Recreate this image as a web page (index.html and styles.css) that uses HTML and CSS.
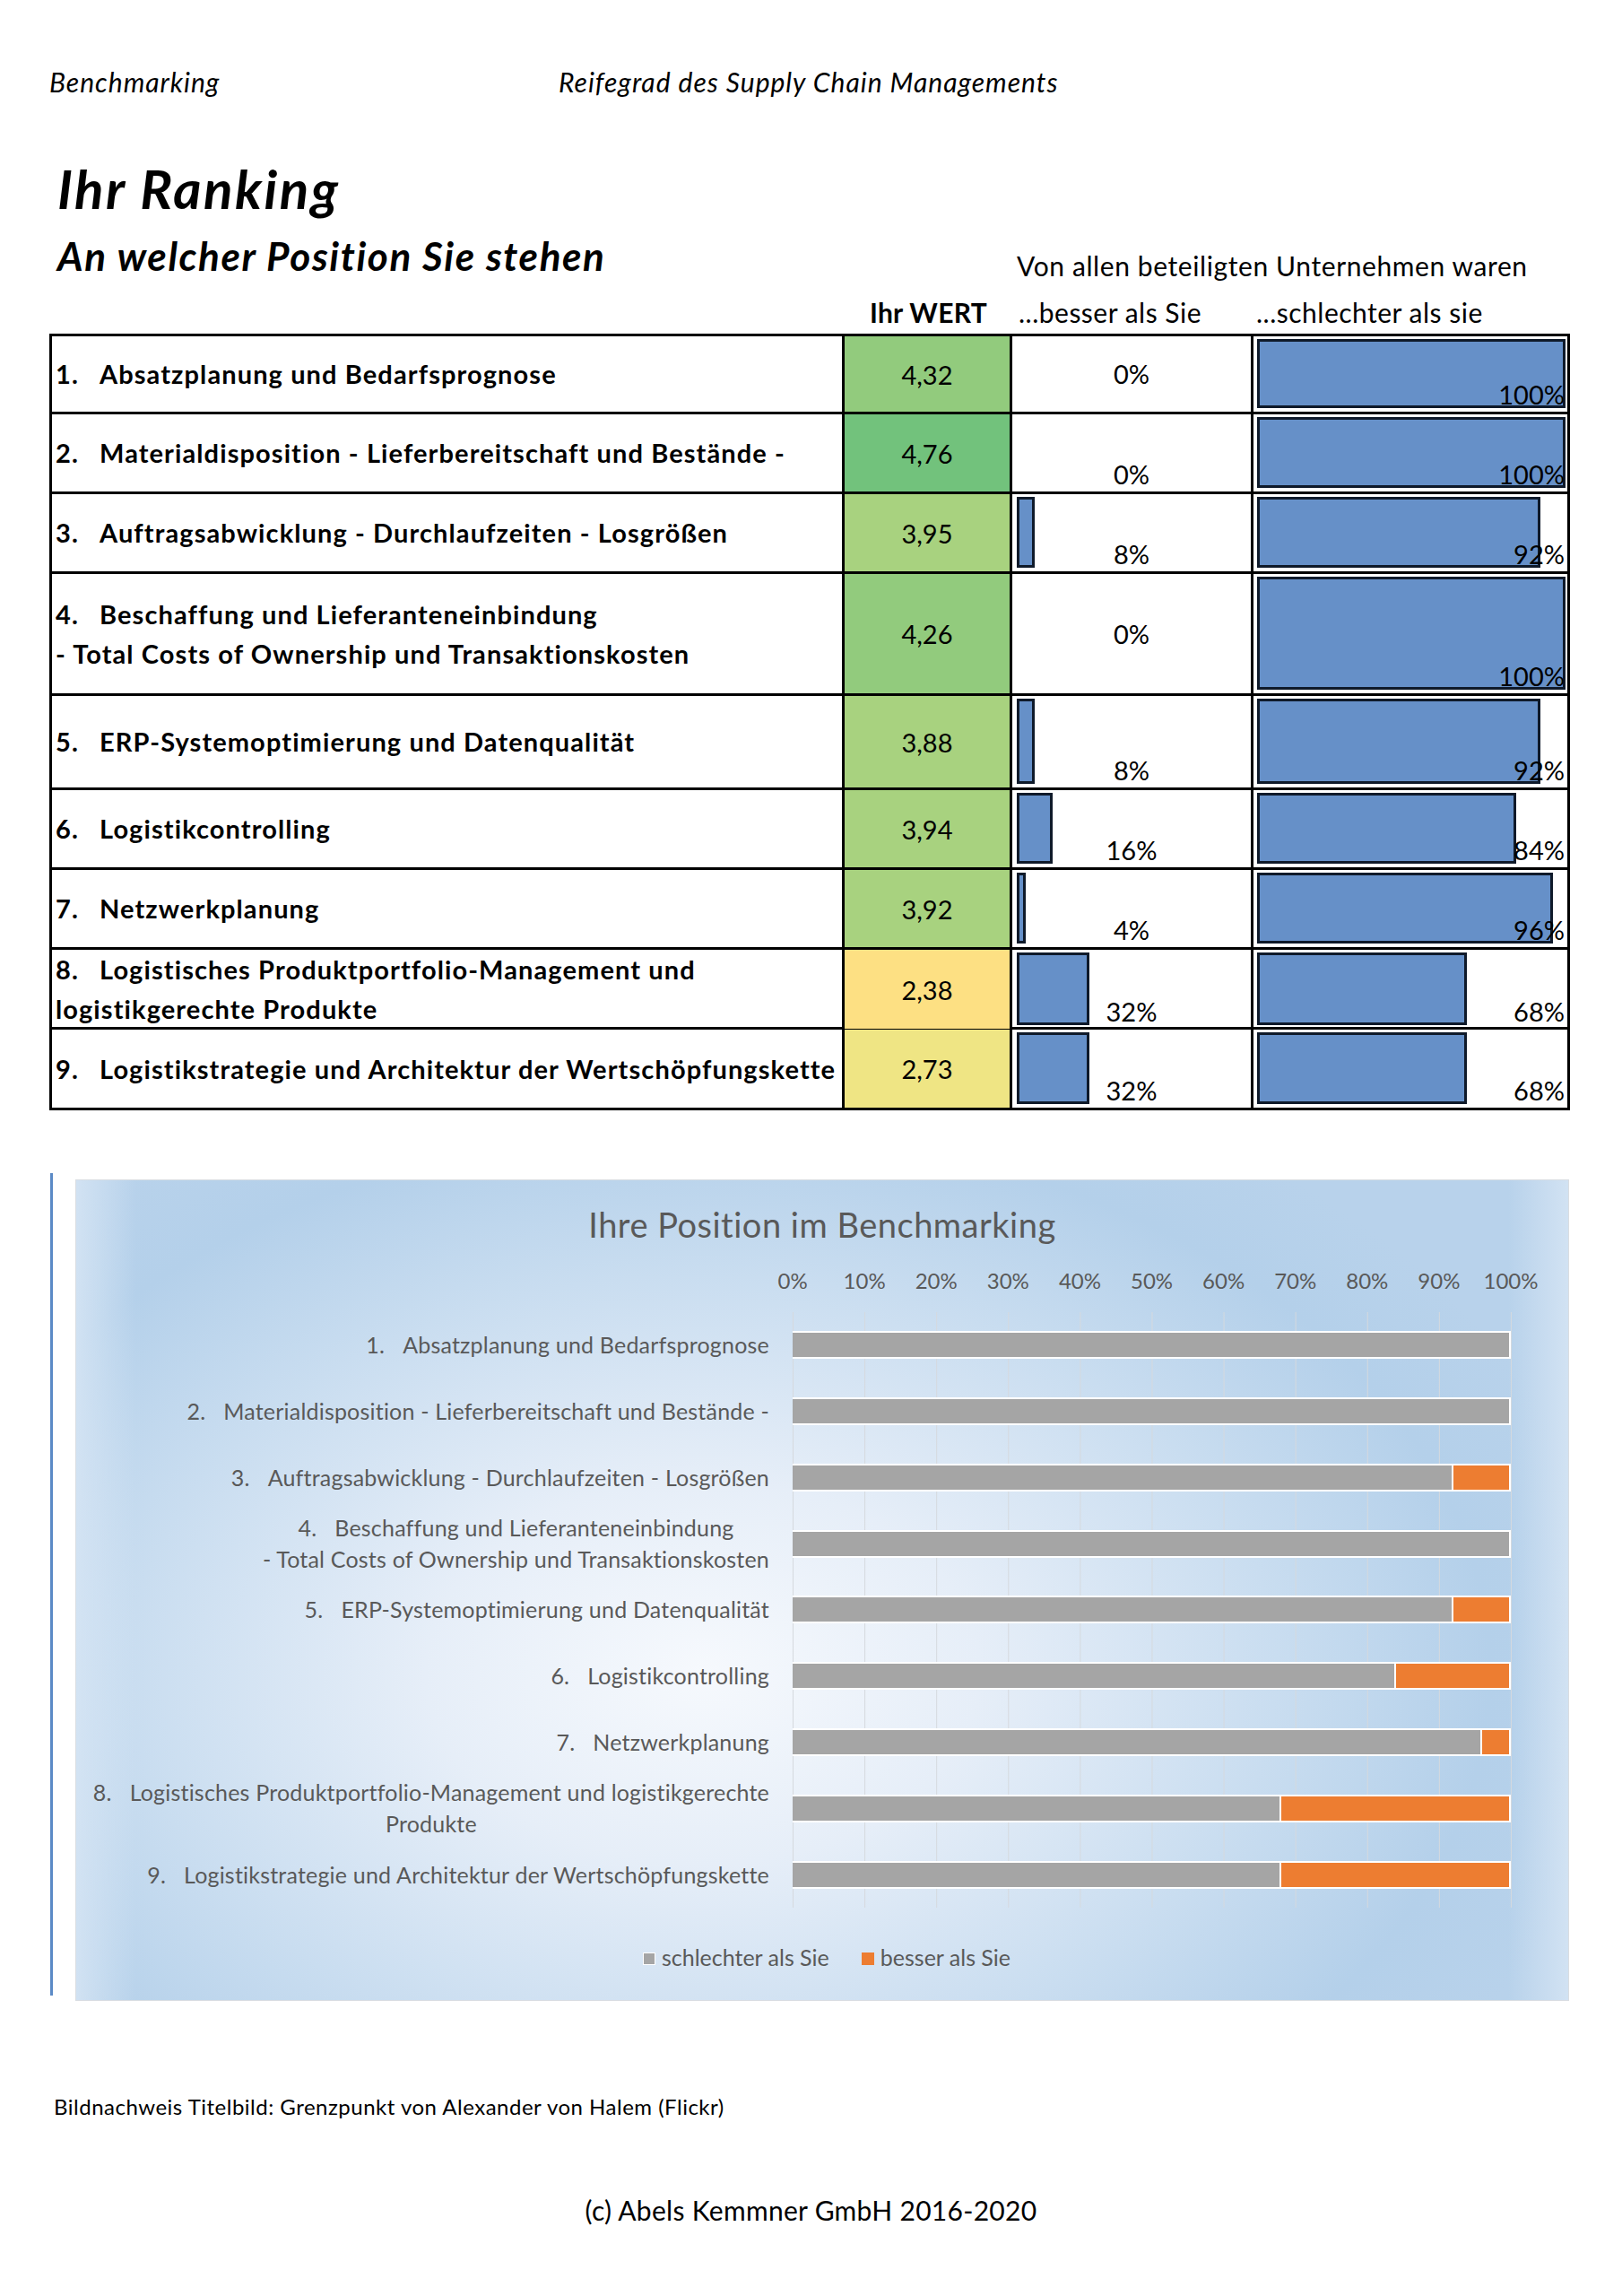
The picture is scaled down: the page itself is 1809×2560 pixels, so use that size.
FILE: index.html
```html
<!DOCTYPE html>
<html lang="de">
<head>
<meta charset="utf-8">
<title>Ihr Ranking</title>
<link rel="stylesheet" href="styles.css">
</head>
<body>
<div class="page">
  <header class="running">
    <span class="run-left">Benchmarking</span>
    <span class="run-center">Reifegrad des Supply Chain Managements</span>
  </header>

  <h1 class="title">Ihr Ranking</h1>
  <div class="subrow">
    <h2 class="subtitle">An welcher Position Sie stehen</h2>
    <p class="intro">Von allen beteiligten Unternehmen waren</p>
  </div>

  <div class="thead">
    <div></div>
    <div class="th-val">Ihr WERT</div>
    <div class="th-better">...besser als Sie</div>
    <div class="th-worse">...schlechter als sie</div>
  </div>

  <div class="table">
    <div class="trow r1">
      <div class="c-label"><div><span class="num">1.</span>Absatzplanung und Bedarfsprognose</div></div>
      <div class="c-val g1">4,32</div>
      <div class="c-better mid"><span class="pct">0%</span></div>
      <div class="c-worse"><div class="dbar" style="width:344px"></div><span class="pct">100%</span></div>
    </div>
    <div class="trow">
      <div class="c-label"><div><span class="num">2.</span>Materialdisposition - Lieferbereitschaft und Bestände -</div></div>
      <div class="c-val g0">4,76</div>
      <div class="c-better"><span class="pct">0%</span></div>
      <div class="c-worse"><div class="dbar" style="width:344px"></div><span class="pct">100%</span></div>
    </div>
    <div class="trow">
      <div class="c-label"><div><span class="num">3.</span>Auftragsabwicklung - Durchlaufzeiten - Losgrößen</div></div>
      <div class="c-val g2">3,95</div>
      <div class="c-better"><div class="dbar" style="width:20px"></div><span class="pct">8%</span></div>
      <div class="c-worse"><div class="dbar" style="width:316px"></div><span class="pct">92%</span></div>
    </div>
    <div class="trow r4">
      <div class="c-label"><div><span class="num">4.</span>Beschaffung und Lieferanteneinbindung<br>- Total Costs of Ownership und Transaktionskosten</div></div>
      <div class="c-val g1">4,26</div>
      <div class="c-better mid"><span class="pct">0%</span></div>
      <div class="c-worse"><div class="dbar" style="width:344px"></div><span class="pct">100%</span></div>
    </div>
    <div class="trow r5">
      <div class="c-label"><div><span class="num">5.</span>ERP-Systemoptimierung und Datenqualität</div></div>
      <div class="c-val g2">3,88</div>
      <div class="c-better"><div class="dbar" style="width:20px"></div><span class="pct">8%</span></div>
      <div class="c-worse"><div class="dbar" style="width:316px"></div><span class="pct">92%</span></div>
    </div>
    <div class="trow">
      <div class="c-label"><div><span class="num">6.</span>Logistikcontrolling</div></div>
      <div class="c-val g2">3,94</div>
      <div class="c-better"><div class="dbar" style="width:40px"></div><span class="pct">16%</span></div>
      <div class="c-worse"><div class="dbar" style="width:289px"></div><span class="pct">84%</span></div>
    </div>
    <div class="trow">
      <div class="c-label"><div><span class="num">7.</span>Netzwerkplanung</div></div>
      <div class="c-val g2">3,92</div>
      <div class="c-better"><div class="dbar" style="width:10px"></div><span class="pct">4%</span></div>
      <div class="c-worse"><div class="dbar" style="width:330px"></div><span class="pct">96%</span></div>
    </div>
    <div class="trow">
      <div class="c-label"><div><span class="num">8.</span>Logistisches Produktportfolio-Management und<br>logistikgerechte Produkte</div></div>
      <div class="c-val y1">2,38</div>
      <div class="c-better"><div class="dbar" style="width:81px"></div><span class="pct">32%</span></div>
      <div class="c-worse"><div class="dbar" style="width:234px"></div><span class="pct">68%</span></div>
    </div>
    <div class="trow r9">
      <div class="c-label"><div><span class="num">9.</span>Logistikstrategie und Architektur der Wertschöpfungskette</div></div>
      <div class="c-val y2">2,73</div>
      <div class="c-better"><div class="dbar" style="width:81px"></div><span class="pct">32%</span></div>
      <div class="c-worse"><div class="dbar" style="width:234px"></div><span class="pct">68%</span></div>
    </div>
  </div>

  <section class="chart-wrap">
    <div class="chart-rule"></div>
    <div class="chart">
      <div class="chart-title">Ihre Position im Benchmarking</div>
      <div class="axis">
        <span>0%</span><span>10%</span><span>20%</span><span>30%</span><span>40%</span><span>50%</span><span>60%</span><span>70%</span><span>80%</span><span>90%</span><span>100%</span>
      </div>
      <div class="plot">
        <div class="cats">
          <div class="crow"><span><span class="cn">1.</span>Absatzplanung und Bedarfsprognose</span></div>
          <div class="crow"><span><span class="cn">2.</span>Materialdisposition - Lieferbereitschaft und Bestände -</span></div>
          <div class="crow"><span><span class="cn">3.</span>Auftragsabwicklung - Durchlaufzeiten - Losgrößen</span></div>
          <div class="crow"><span><span class="cn">4.</span>Beschaffung und Lieferanteneinbindung<br>- Total Costs of Ownership und Transaktionskosten</span></div>
          <div class="crow"><span><span class="cn">5.</span>ERP-Systemoptimierung und Datenqualität</span></div>
          <div class="crow"><span><span class="cn">6.</span>Logistikcontrolling</span></div>
          <div class="crow"><span><span class="cn">7.</span>Netzwerkplanung</span></div>
          <div class="crow"><span><span class="cn">8.</span>Logistisches Produktportfolio-Management und logistikgerechte<br>Produkte</span></div>
          <div class="crow"><span><span class="cn">9.</span>Logistikstrategie und Architektur der Wertschöpfungskette</span></div>
        </div>
        <div class="bars">
          <div class="brow"><div class="seg worse" style="width:100%"></div></div>
          <div class="brow"><div class="seg worse" style="width:100%"></div></div>
          <div class="brow"><div class="seg worse" style="width:92%"></div><div class="seg better" style="width:8%"></div></div>
          <div class="brow"><div class="seg worse" style="width:100%"></div></div>
          <div class="brow"><div class="seg worse" style="width:92%"></div><div class="seg better" style="width:8%"></div></div>
          <div class="brow"><div class="seg worse" style="width:84%"></div><div class="seg better" style="width:16%"></div></div>
          <div class="brow"><div class="seg worse" style="width:96%"></div><div class="seg better" style="width:4%"></div></div>
          <div class="brow"><div class="seg worse" style="width:68%"></div><div class="seg better" style="width:32%"></div></div>
          <div class="brow"><div class="seg worse" style="width:68%"></div><div class="seg better" style="width:32%"></div></div>
        </div>
      </div>
      <div class="legend">
        <span class="lg"><i class="sw sw-grey"></i>schlechter als Sie</span>
        <span class="lg"><i class="sw sw-orange"></i>besser als Sie</span>
      </div>
    </div>
  </section>

  <p class="credit">Bildnachweis Titelbild: Grenzpunkt von Alexander von Halem (Flickr)</p>
  <p class="copy">(c) Abels Kemmner GmbH 2016-2020</p>
</div>
</body>
</html>
```

FILE: styles.css
```css
* { box-sizing: border-box; }

html, body {
  margin: 0;
  padding: 0;
  background: #fff;
}

body {
  font-family: "Lato", "Liberation Sans", sans-serif;
  color: #000;
}

.page {
  width: 1809px;
  min-height: 2560px;
  padding: 74px 55px 0 55px;
}

/* running header */
.running {
  font-style: italic;
  font-size: 30px;
  line-height: 34px;
  letter-spacing: 1px;
  white-space: nowrap;
}
.run-left {
  display: inline-block;
  width: 560px;
}

/* titles */
.title {
  margin: 70px 0 0 9px;
  font-size: 60px;
  line-height: 64px;
  font-weight: 700;
  font-style: italic;
  letter-spacing: 2.5px;
}
.subrow {
  display: flex;
  align-items: flex-start;
  margin-top: 18px;
}
.subtitle {
  margin: 0 0 0 9px;
  width: 1070px;
  font-size: 44px;
  line-height: 50px;
  font-weight: 700;
  font-style: italic;
  letter-spacing: 1.6px;
  white-space: nowrap;
}
.intro {
  margin: 19px 0 0 0;
  font-size: 30px;
  line-height: 34px;
  letter-spacing: 0.6px;
  white-space: nowrap;
}

/* table header */
.thead {
  display: grid;
  grid-template-columns: 884px 187px 269px 350px;
  padding-left: 3px;
  margin-top: 18px;
  height: 41px;
  font-size: 30px;
  line-height: 34px;
  letter-spacing: 0.5px;
  white-space: nowrap;
}
.th-val {
  font-weight: 700;
  text-align: center;
  letter-spacing: 0.3px;
}
.th-better { padding-left: 7px; }
.th-worse { padding-left: 3px; }

/* table */
.table {
  width: 1696px;
  border: 3px solid #000;
  border-bottom: 0;
}
.trow {
  display: grid;
  grid-template-columns: 884px 187px 269px 350px;
  height: 89px;
  border-bottom: 3px solid #000;
}
.trow.r1 { height: 87px; }
.trow.r4 { height: 136px; }
.trow.r5 { height: 105px; }
.trow.r9 { height: 90px; }

.trow > div {
  border-right: 3px solid #000;
}
.trow > div:last-child {
  border-right: 0;
}

.c-label {
  display: flex;
  align-items: center;
  padding-left: 4px;
  font-size: 29px;
  line-height: 44px;
  font-weight: 700;
  letter-spacing: 1.1px;
  white-space: nowrap;
}
.num {
  display: inline-block;
  width: 49px;
}

.c-val {
  display: flex;
  align-items: center;
  justify-content: center;
  font-size: 29px;
}
.g0 { background: #72c27c; }
.g1 { background: #92cb7d; }
.g2 { background: #a8d27f; }
.y1 { background: #fde083; }
.y2 { background: #efe584; }

.c-better,
.c-worse {
  display: grid;
  font-size: 29px;
  line-height: 32px;
}
.c-better > *,
.c-worse > * {
  grid-area: 1 / 1;
}
.dbar {
  justify-self: start;
  align-self: stretch;
  background: #6690c8;
  border: 3px solid #0f1a2a;
}
.c-better .dbar { margin: 3px 0 4px 5px; }
.c-worse .dbar { margin: 3px 0 4px 4px; }

.pct {
  align-self: end;
  padding-bottom: 3px;
}
.c-better .pct { justify-self: center; }
.c-better.mid .pct { align-self: center; padding-bottom: 0; }
.c-worse .pct {
  justify-self: end;
  padding-right: 3px;
}

/* chart */
.chart-wrap {
  display: flex;
  align-items: flex-start;
  margin-top: 70px;
}
.chart-rule {
  width: 3px;
  height: 917px;
  margin-left: 1px;
  background: #5b8ac6;
}
.chart {
  width: 1666px;
  height: 916px;
  margin: 7px 0 0 25px;
  border: 1px solid #d9dde2;
  color: #595959;
  padding-top: 26px;
  background:
    linear-gradient(to right, rgba(214, 229, 244, 0.85) 0%, rgba(214, 229, 244, 0) 4%, rgba(214, 229, 244, 0) 96%, rgba(214, 229, 244, 0.85) 100%),
    radial-gradient(ellipse 62% 78% at 42% 60%, #f6f9fd 0%, #e6eef8 30%, #c9ddf0 62%, #b4d0ea 85%, #b8d2eb 100%);
}
.chart-title {
  text-align: center;
  font-size: 38px;
  line-height: 46px;
  letter-spacing: 0.5px;
}
.axis {
  display: grid;
  grid-template-columns: repeat(11, 80.1px);
  margin: 26px 0 0 759px;
  width: 882px;
  font-size: 24px;
  line-height: 28px;
  text-align: center;
}
.plot {
  display: flex;
  margin-top: 21px;
  height: 664px;
}
.cats {
  width: 773px;
  margin-right: 26px;
  display: flex;
  flex-direction: column;
}
.crow {
  height: 73.78px;
  display: flex;
  align-items: center;
  justify-content: flex-end;
  text-align: center;
  font-size: 25px;
  line-height: 35px;
  letter-spacing: 0.2px;
  white-space: nowrap;
}
.cn {
  margin-right: 20px;
}
.bars {
  width: 802px;
  display: flex;
  flex-direction: column;
  background-image: linear-gradient(to right, #d5d9de 0, #d5d9de 1px, transparent 1px);
  background-size: 80.1px 100%;
  background-repeat: repeat-x;
}
.brow {
  height: 73.78px;
  width: 801px;
  display: flex;
  align-items: center;
}
.seg {
  height: 31px;
  border: 2px solid #fff;
  border-left-width: 0;
}
.seg.worse { background: #a5a5a5; }
.seg.better { background: #ed7d31; }

.legend {
  display: flex;
  justify-content: center;
  gap: 36px;
  margin-top: 41px;
  padding-left: 10px;
  font-size: 25px;
  line-height: 28px;
}
.lg {
  display: flex;
  align-items: center;
  gap: 7px;
}
.sw {
  display: inline-block;
  width: 14px;
  height: 14px;
  margin-top: 3px;
}
.sw-grey { background: #a5a5a5; border: 1px solid #fff; }
.sw-orange { background: #ed7d31; }

/* footer */
.credit {
  margin: 104px 0 0 5px;
  font-size: 24px;
  line-height: 28px;
  letter-spacing: 0.5px;
}
.copy {
  margin: 84px 0 0 0;
  text-align: center;
  font-size: 30px;
  line-height: 34px;
  letter-spacing: 0.3px;
}
```
